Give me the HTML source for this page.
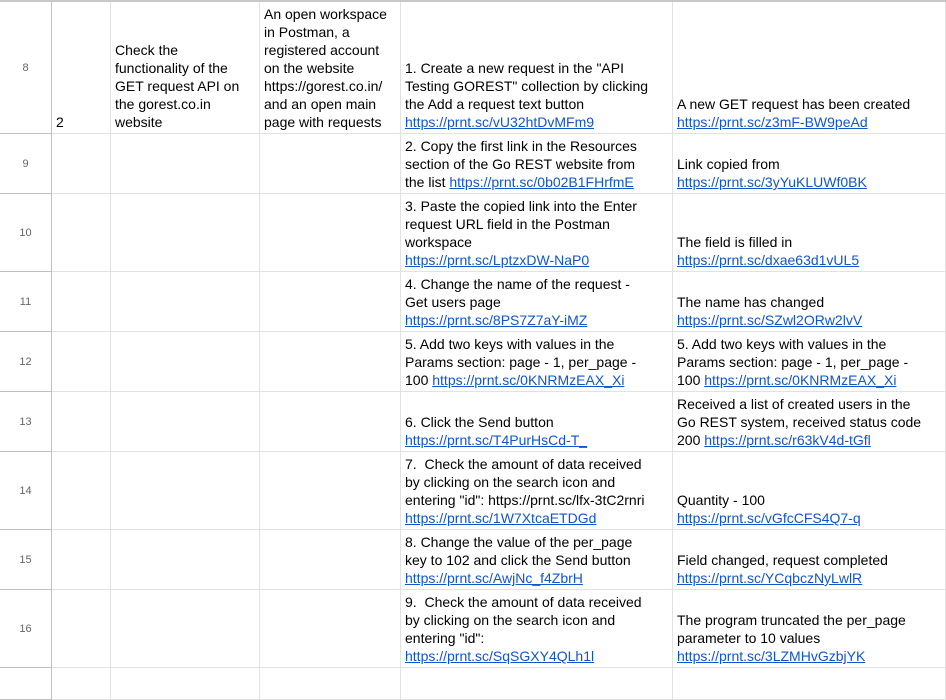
<!DOCTYPE html>
<html><head><meta charset="utf-8"><style>
body{margin:0;width:946px;height:674px;overflow:hidden;background:#fff;font-family:"Liberation Sans",Arial,sans-serif;position:relative}
.c{position:absolute;box-sizing:border-box;border-right:1px solid #e2e2e2;border-bottom:1px solid #e2e2e2;display:flex;flex-direction:column;justify-content:flex-end;padding:0 3px 2px 4px;font-size:14px;line-height:18px;color:#000;white-space:nowrap;overflow:hidden}
.h{position:absolute;box-sizing:border-box;border-right:1px solid #c0c0c0;border-bottom:1px solid #c0c0c0;display:flex;align-items:center;justify-content:center;font-size:11px;color:#666;left:0;width:52px}
a{color:#1155cc;text-decoration:underline}
</style></head><body>
<div style="position:absolute;left:0;top:0;width:946px;height:2px;background:#c8c8c8"></div>
<div id="g"></div>
<script>
var tops=[2,134,194,272,332,392,452,530,590,668,700];
var xs=[52,111,260,401,673,946];
var L=function(u){return '<a>'+u+'</a>'};
var data=[
["8","2","Check the<br>functionality of the<br>GET request API on<br>the gorest.co.in<br>website","An open workspace<br>in Postman, a<br>registered account<br>on the website<br>https://gorest.co.in/<br>and an open main<br>page with requests","1. Create a new request in the \"API<br>Testing GOREST\" collection by clicking<br>the Add a request text button<br>"+L("https://prnt.sc/vU32htDvMFm9"),"A new GET request has been created<br>"+L("https://prnt.sc/z3mF-BW9peAd")],
["9","","","","2. Copy the first link in the Resources<br>section of the Go REST website from<br>the list "+L("https://prnt.sc/0b02B1FHrfmE"),"Link copied from<br>"+L("https://prnt.sc/3yYuKLUWf0BK")],
["10","","","","3. Paste the copied link into the Enter<br>request URL field in the Postman<br>workspace<br>"+L("https://prnt.sc/LptzxDW-NaP0"),"The field is filled in<br>"+L("https://prnt.sc/dxae63d1vUL5")],
["11","","","","4. Change the name of the request -<br>Get users page<br>"+L("https://prnt.sc/8PS7Z7aY-iMZ"),"The name has changed<br>"+L("https://prnt.sc/SZwl2ORw2lvV")],
["12","","","","5. Add two keys with values in the<br>Params section: page - 1, per_page -<br>100 "+L("https://prnt.sc/0KNRMzEAX_Xi"),"5. Add two keys with values in the<br>Params section: page - 1, per_page -<br>100 "+L("https://prnt.sc/0KNRMzEAX_Xi")],
["13","","","","6. Click the Send button<br>"+L("https://prnt.sc/T4PurHsCd-T_"),"Received a list of created users in the<br>Go REST system, received status code<br>200 "+L("https://prnt.sc/r63kV4d-tGfl")],
["14","","","","7.&nbsp; Check the amount of data received<br>by clicking on the search icon and<br>entering \"id\": https://prnt.sc/lfx-3tC2rnri<br>"+L("https://prnt.sc/1W7XtcaETDGd"),"Quantity - 100<br>"+L("https://prnt.sc/vGfcCFS4Q7-q")],
["15","","","","8. Change the value of the per_page<br>key to 102 and click the Send button<br>"+L("https://prnt.sc/AwjNc_f4ZbrH"),"Field changed, request completed<br>"+L("https://prnt.sc/YCqbczNyLwlR")],
["16","","","","9.&nbsp; Check the amount of data received<br>by clicking on the search icon and<br>entering \"id\":<br>"+L("https://prnt.sc/SqSGXY4QLh1l"),"The program truncated the per_page<br>parameter to 10 values<br>"+L("https://prnt.sc/3LZMHvGzbjYK")],
["","","","","",""]
];
var h='';
for(var r=0;r<data.length;r++){
 var t=tops[r],hh=tops[r+1]-t;
 h+='<div class="h" style="top:'+t+'px;height:'+hh+'px">'+data[r][0]+'</div>';
 for(var c=0;c<5;c++){
  h+='<div class="c" style="left:'+xs[c]+'px;top:'+t+'px;width:'+(xs[c+1]-xs[c])+'px;height:'+hh+'px"><div>'+data[r][c+1]+'</div></div>';
 }
}
document.getElementById('g').outerHTML=h;
</script>
</body></html>
